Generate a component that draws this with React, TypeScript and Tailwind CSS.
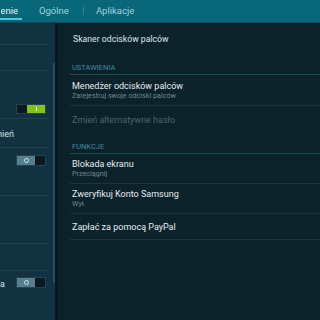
export default function App() {
  return (
    <div className="w-[320px] h-[320px] overflow-hidden bg-[#0b222b] flex flex-col font-['Roboto',sans-serif]">
      <TabBar />
      <div className="flex flex-1 min-h-0">
        <LeftPanel />
        <div className="w-[3px] bg-[#07171d]" />
        <RightPanel />
      </div>
    </div>
  );
}

function TabBar() {
  return (
    <div className="h-[23px] shrink-0 bg-[#08687a] border-b border-[#0a4c59] flex items-stretch text-[9.5px] leading-none whitespace-nowrap">
      <div className="relative w-[22px] flex items-center text-[#e2f4f7]">
        <div className="ml-[1px] w-[17px] flex justify-end overflow-hidden">
          <span>Połączenie</span>
        </div>
        <div className="absolute left-0 right-0 bottom-[2px] h-[2px] bg-[#56c6e2]" />
      </div>
      <div className="ml-[17px] flex items-center text-[#9fd3dd] pb-[1px]">Ogólne</div>
      <div className="ml-[14px] flex items-center">
        <div className="w-px h-[8px] bg-[#2f8696]" />
      </div>
      <div className="ml-[12px] flex items-center text-[#9fd3dd] pb-[1px]">Aplikacje</div>
    </div>
  );
}

function Toggle({ on }: { on: boolean }) {
  if (on) {
    return (
      <div className="w-[30px] h-[10px] shrink-0 flex border border-[#24444f]">
        <div className="w-[10px] bg-[#0a1a20]" />
        <div className="flex-1 bg-[#84c41a] flex items-center justify-center">
          <div className="w-px h-[4px] bg-[#f2ffe0]" />
        </div>
      </div>
    );
  }
  return (
    <div className="w-[30px] h-[11px] shrink-0 flex border border-[#24444f]">
      <div className="w-[18px] bg-[#557f8f] flex items-center justify-center">
        <div className="w-[5px] h-[5px] rounded-full border border-[#d3e3e8]" />
      </div>
      <div className="flex-1 bg-[#0a1a20]" />
    </div>
  );
}

function LeftPanel() {
  const row = "border-b border-[#1e4350] mr-[7px]";
  return (
    <div className="relative w-[55px] bg-[#11323e] overflow-hidden text-[9px] text-[#d6e3e7] leading-none whitespace-nowrap">
      <div className={`h-[22px] ${row}`} />
      <div className={`h-[26px] ${row}`} />
      <div className={`h-[48px] ${row} pl-[16px] pt-[33px]`}>
        <Toggle on />
      </div>
      <div className={`h-[29px] ${row} flex items-center`}>
        <div className="w-[14px] shrink-0 flex justify-end overflow-hidden pt-[2px]">
          <span>Zmień</span>
        </div>
      </div>
      <div className={`h-[48px] ${row} pl-[16px] pt-[7px]`}>
        <Toggle on={false} />
      </div>
      <div className={`h-[48px] ${row}`} />
      <div className={`h-[27px] ${row}`} />
      <div className="h-[40px] flex items-start pt-[6px] mr-[7px]">
        <div className="w-[5px] mr-[11px] shrink-0 flex justify-end overflow-hidden pt-[3px]">
          <span>dla</span>
        </div>
        <Toggle on={false} />
      </div>
      <div className="absolute right-0 top-[40px] w-[2px] h-[220px] bg-[#25515f]" />
    </div>
  );
}

function Section({ title }: { title: string }) {
  return (
    <div className="h-[19px] flex items-end pb-[3px] pl-[2px] border-b border-[#1c4a57] text-[7.5px] leading-none text-[#3f8c9d]">
      {title}
    </div>
  );
}

function Item({ title, sub, h }: { title: string; sub?: string; h: string }) {
  return (
    <div className={`${h} flex flex-col justify-center pl-[2px] border-b border-[#18343e]`}>
      <div className="text-[9px] leading-[10px] text-[#e4ecee]">{title}</div>
      {sub && <div className="text-[7.2px] leading-[8px] text-[#6c8891] mt-[1px]">{sub}</div>}
    </div>
  );
}

function RightPanel() {
  return (
    <div className="flex-1 pl-[12px] flex flex-col whitespace-nowrap">
      <div className="h-[33px] flex items-center pl-[3px] text-[8.7px] leading-none text-[#dfe8eb]">
        Skaner odcisków palców
      </div>
      <Section title="USTAWIENIA" />
      <Item h="h-[31px]" title="Menedżer odcisków palców" sub="Zarejestruj swoje odciski palców" />
      <div className="h-[29px] flex items-center pl-[2px] text-[9px] leading-none text-[#4a6670]">
        Zmień alternatywne hasło
      </div>
      <Section title="FUNKCJE" />
      <Item h="h-[30px]" title="Blokada ekranu" sub="Przeciągnij" />
      <Item h="h-[30px]" title="Zweryfikuj Konto Samsung" sub="Wył." />
      <Item h="h-[26px]" title="Zapłać za pomocą PayPal" />
    </div>
  );
}
